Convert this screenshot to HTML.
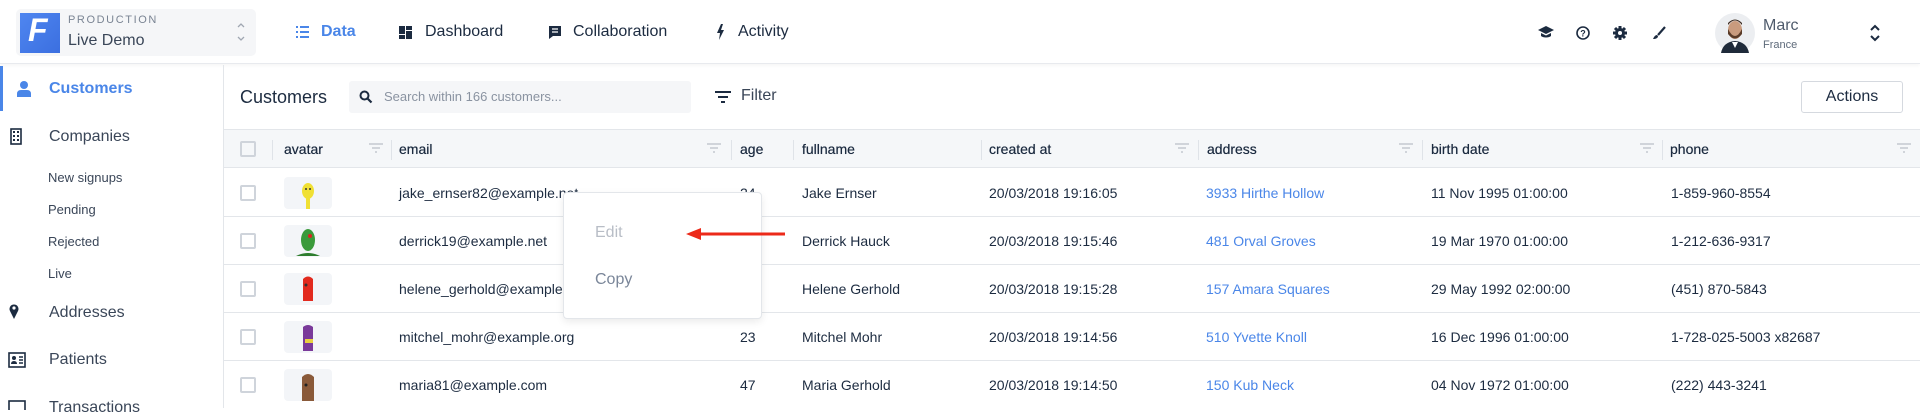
<!DOCTYPE html>
<html><head><meta charset="utf-8"><style>
*{box-sizing:border-box;margin:0;padding:0}
body{width:1920px;height:408px;overflow:hidden;background:#fff;font-family:"Liberation Sans",sans-serif;color:#1c2b40;position:relative}
.a{position:absolute;white-space:nowrap}
.hdr{position:absolute;left:0;top:0;width:1920px;height:64px;border-bottom:1px solid #e8eaee;box-shadow:0 2px 3px rgba(0,0,0,.03)}
.nav{font-size:16px;color:#1c2b40;top:23px}
.side{font-size:16px;color:#3a4658}
.sub{font-size:13px;color:#3a4658}
.th{font-size:14px;color:#1c2b40;top:141px;text-shadow:0 0 .4px #1c2b40}
.td{font-size:14px;color:#1c2b40}
.lnk{color:#4a86e8}
.sep{position:absolute;top:140px;width:1px;height:20px;background:#dfe3e8}
.cb{position:absolute;width:16px;height:16px;border:2px solid #cfd4db;border-radius:2px;left:240px}
.rl{position:absolute;left:224px;width:1696px;height:1px;background:#e3e6ea}
.av{position:absolute;left:284px;width:48px;height:32px;background:#f3f5f8;border-radius:4px}
.fi{position:absolute;top:143px;width:14px;height:10px}
</style></head><body>
<div class="hdr"></div>
<div class="a" style="left:16px;top:9px;width:240px;height:47px;background:#f5f6f8;border-radius:5px"></div>
<div class="a" style="left:20px;top:13px;width:40px;height:40px;background:linear-gradient(135deg,#4f86f0,#3b6fe0)"></div>
<div class="a" style="left:28px;top:12px;font-size:32px;font-style:italic;font-weight:bold;color:#fff">F</div>
<div class="a" style="left:68px;top:14px;font-size:11px;letter-spacing:1.6px;color:#7a8493">PRODUCTION</div>
<div class="a" style="left:68px;top:32px;font-size:16px;color:#3a4658">Live Demo</div>
<svg class="a" style="left:236px;top:22px" width="10" height="20"><path d="M2 5l3-3 3 3M2 15l3 3 3-3" fill="none" stroke="#a0a7b2" stroke-width="1.3"/></svg>
<!-- nav -->
<svg class="a" style="left:296px;top:26px" width="13" height="12"><g fill="#4a86e8"><rect x="0" y="0" width="2" height="2"/><rect x="4" y="0" width="9" height="2"/><rect x="0" y="5" width="2" height="2"/><rect x="4" y="5" width="9" height="2"/><rect x="0" y="10" width="2" height="2"/><rect x="4" y="10" width="9" height="2"/></g></svg>
<div class="a nav" style="left:321px;color:#4a86e8;font-weight:bold">Data</div>
<svg class="a" style="left:399px;top:26px" width="13" height="13"><g fill="#1c2b40"><rect width="6" height="8"/><rect x="7" width="6" height="4"/><rect y="9" width="6" height="4"/><rect x="7" y="5" width="6" height="8"/></g></svg>
<div class="a nav" style="left:425px">Dashboard</div>
<svg class="a" style="left:548px;top:25px" width="14" height="15"><path d="M1 1h12v10H5l-4 3z" fill="#1c2b40"/><path d="M4 4h6M4 7h6" stroke="#fff" stroke-width="1.3"/></svg>
<div class="a nav" style="left:573px">Collaboration</div>
<svg class="a" style="left:716px;top:24px" width="9" height="16"><path d="M5 0L1 9h3l-1 7 5-10H5l2-6z" fill="#1c2b40"/></svg>
<div class="a nav" style="left:738px">Activity</div>
<!-- right icons -->
<svg class="a" style="left:1538px;top:25px" width="16" height="15"><path d="M8 1L0 5l8 4 8-4z M3 8v3c2 2 8 2 10 0V8L8 10.5z" fill="#1c2b40"/></svg>
<svg class="a" style="left:1576px;top:26px" width="14" height="14"><circle cx="7" cy="7" r="6" fill="none" stroke="#1c2b40" stroke-width="1.6"/><text x="7" y="10.5" font-size="9" font-weight="bold" text-anchor="middle" fill="#1c2b40" font-family="Liberation Sans">?</text></svg>
<svg class="a" style="left:1613px;top:26px" width="14" height="14"><circle cx="7" cy="7" r="5" fill="#1c2b40"/><g stroke="#1c2b40" stroke-width="3"><path d="M7 0v14M0 7h14M2 2l10 10M12 2L2 12"/></g><circle cx="7" cy="7" r="2" fill="#fff"/></svg>
<svg class="a" style="left:1652px;top:26px" width="14" height="14"><path d="M13 1L6 9" stroke="#1c2b40" stroke-width="2.2"/><path d="M5 9c-2 0-3 2-4 4 3 0 5-1 5-3z" fill="#1c2b40"/></svg>
<svg class="a" style="left:1715px;top:13px" width="40" height="40"><circle cx="20" cy="20" r="20" fill="#eceef1"/><ellipse cx="20" cy="17" rx="7" ry="9" fill="#c99b7e"/><path d="M13 16q7 14 14 0v5q-7 9-14 0z" fill="#5a3b28"/><path d="M13 12q7-9 14 0v-2q-7-7-14 0z" fill="#3d2a1f"/><path d="M6 40q2-11 14-12 12 1 14 12z" fill="#1f2a3a"/><path d="M17 29l3 6 3-6z" fill="#fff"/></svg>
<div class="a" style="left:1763px;top:17px;font-size:16px;color:#4f5b6c">Marc</div>
<div class="a" style="left:1763px;top:39px;font-size:11px;color:#5e6a7a">France</div>
<svg class="a" style="left:1869px;top:24px" width="12" height="18"><path d="M2 6l4-4 4 4M2 12l4 4 4-4" fill="none" stroke="#1c2b40" stroke-width="2"/></svg>
<!-- sidebar -->
<div class="a" style="left:223px;top:65px;width:1px;height:343px;background:#e3e6ea"></div>
<div class="a" style="left:0;top:66px;width:3px;height:45px;background:#4a86e8"></div>
<svg class="a" style="left:17px;top:81px" width="14" height="16"><circle cx="7" cy="4" r="4" fill="#4a86e8"/><path d="M0 16v-3q0-4 4-4h6q4 0 4 4v3z" fill="#4a86e8"/></svg>
<div class="a side" style="left:49px;top:80px;color:#4a86e8;font-weight:bold">Customers</div>
<svg class="a" style="left:10px;top:128px" width="12" height="17"><rect x="1" y="1" width="10" height="15" fill="none" stroke="#1c2b40" stroke-width="1.6"/><g fill="#1c2b40"><rect x="3" y="3" width="2" height="2"/><rect x="7" y="3" width="2" height="2"/><rect x="3" y="7" width="2" height="2"/><rect x="7" y="7" width="2" height="2"/><rect x="3" y="11" width="2" height="2"/><rect x="7" y="11" width="2" height="2"/></g></svg>
<div class="a side" style="left:49px;top:128px">Companies</div>
<div class="a sub" style="left:48px;top:170px">New signups</div>
<div class="a sub" style="left:48px;top:202px">Pending</div>
<div class="a sub" style="left:48px;top:234px">Rejected</div>
<div class="a sub" style="left:48px;top:266px">Live</div>
<svg class="a" style="left:9px;top:303px" width="10" height="16"><path d="M5 16L1 8a4.5 4.5 0 118 0z" fill="#1c2b40"/><circle cx="5" cy="5" r="1.6" fill="#fff"/></svg>
<div class="a side" style="left:49px;top:304px">Addresses</div>
<svg class="a" style="left:8px;top:352px" width="18" height="16"><rect x="1" y="1" width="16" height="14" fill="none" stroke="#1c2b40" stroke-width="1.6"/><circle cx="6" cy="6" r="2" fill="#1c2b40"/><path d="M3 12q0-3 3-3t3 3z" fill="#1c2b40"/><path d="M11 5h4M11 8h4M11 11h4" stroke="#1c2b40" stroke-width="1.4"/></svg>
<div class="a side" style="left:49px;top:351px">Patients</div>
<svg class="a" style="left:8px;top:400px" width="18" height="10"><rect x="1" y="1" width="16" height="14" fill="none" stroke="#1c2b40" stroke-width="1.6"/></svg>
<div class="a side" style="left:49px;top:399px">Transactions</div>
<!-- toolbar -->
<div class="a" style="left:240px;top:87px;font-size:18px;color:#1c2b40">Customers</div>
<div class="a" style="left:349px;top:81px;width:342px;height:32px;background:#f5f6f8;border-radius:3px"></div>
<svg class="a" style="left:359px;top:90px" width="14" height="14"><circle cx="5.5" cy="5.5" r="4" fill="none" stroke="#1c2b40" stroke-width="2"/><path d="M8.5 8.5l4 4" stroke="#1c2b40" stroke-width="2.2"/></svg>
<div class="a" style="left:384px;top:89px;font-size:13px;color:#8a93a1">Search within 166 customers...</div>
<svg class="a" style="left:715px;top:91px" width="16" height="12"><path d="M0 1h16M3 6h10M6 11h4" stroke="#1c2b40" stroke-width="2"/></svg>
<div class="a" style="left:741px;top:87px;font-size:16px;color:#3a4658">Filter</div>
<div class="a" style="left:1801px;top:81px;width:102px;height:32px;border:1px solid #d5d9df;border-radius:3px;font-size:16px;text-align:center;line-height:30px;color:#1c2b40">Actions</div>
<!-- table header -->
<div class="a" style="left:224px;top:129px;width:1696px;height:39px;background:#f5f7f9;border-top:1px solid #e3e6ea;border-bottom:1px solid #e3e6ea"></div>
<div class="cb" style="top:141px"></div>
<div class="sep" style="left:272px"></div>
<div class="a th" style="left:284px">avatar</div>
<div class="sep" style="left:391px"></div>
<div class="a th" style="left:399px">email</div>
<div class="sep" style="left:731px"></div>
<div class="a th" style="left:740px">age</div>
<div class="sep" style="left:793px"></div>
<div class="a th" style="left:802px">fullname</div>
<div class="sep" style="left:981px"></div>
<div class="a th" style="left:989px">created at</div>
<div class="sep" style="left:1198px"></div>
<div class="a th" style="left:1207px">address</div>
<div class="sep" style="left:1422px"></div>
<div class="a th" style="left:1431px">birth date</div>
<div class="sep" style="left:1662px"></div>
<div class="a th" style="left:1670px">phone</div>
<svg width="0" height="0" style="position:absolute"><defs><g id="f"><path d="M0 1h14M3 5h8M6 9h2" stroke="#c3c8d0" stroke-width="1.5"/></g></defs></svg>
<svg class="fi" style="left:369px"><use href="#f"/></svg>
<svg class="fi" style="left:707px"><use href="#f"/></svg>
<svg class="fi" style="left:1175px"><use href="#f"/></svg>
<svg class="fi" style="left:1399px"><use href="#f"/></svg>
<svg class="fi" style="left:1640px"><use href="#f"/></svg>
<svg class="fi" style="left:1897px"><use href="#f"/></svg>
<!-- rows -->
<div class="rl" style="top:216px"></div><div class="rl" style="top:264px"></div><div class="rl" style="top:312px"></div><div class="rl" style="top:360px"></div>
<div class="cb" style="top:185px"></div><div class="cb" style="top:233px"></div><div class="cb" style="top:281px"></div><div class="cb" style="top:329px"></div><div class="cb" style="top:377px"></div>
<div class="av" style="top:177px"><svg width="48" height="32"><ellipse cx="24" cy="14" rx="6" ry="8" fill="#f0e034"/><rect x="22" y="20" width="4" height="12" fill="#f0e034"/><circle cx="22" cy="12" r="1" fill="#333"/><circle cx="26" cy="12" r="1" fill="#333"/></svg></div>
<div class="av" style="top:225px"><svg width="48" height="32"><ellipse cx="24" cy="15" rx="7" ry="11" fill="#3a9a3a"/><path d="M12 31q12-6 24 0z" fill="#2e7d2e"/><circle cx="26" cy="11" r="2" fill="#d22"/></svg></div>
<div class="av" style="top:273px"><svg width="48" height="32"><path d="M19 6q5-5 10 0v22h-10z" fill="#e22a1e"/><circle cx="22" cy="12" r="1.5" fill="#333"/></svg></div>
<div class="av" style="top:321px"><svg width="48" height="32"><path d="M19 6q5-4 10 0v24h-10z" fill="#7a3a9a"/><rect x="21" y="18" width="8" height="4" fill="#e8d040"/></svg></div>
<div class="av" style="top:369px"><svg width="48" height="32"><path d="M18 8q6-6 12 0v24h-12z" fill="#8a5a3a"/><circle cx="22" cy="16" r="1.5" fill="#222"/></svg></div>

<div class="a td" style="left:399px;top:185px">jake_ernser82@example.net</div>
<div class="a td" style="left:740px;top:185px">24</div>
<div class="a td" style="left:802px;top:185px">Jake Ernser</div>
<div class="a td" style="left:989px;top:185px">20/03/2018 19:16:05</div>
<div class="a td lnk" style="left:1206px;top:185px">3933 Hirthe Hollow</div>
<div class="a td" style="left:1431px;top:185px">11 Nov 1995 01:00:00</div>
<div class="a td" style="left:1671px;top:185px">1-859-960-8554</div>

<div class="a td" style="left:399px;top:233px">derrick19@example.net</div>
<div class="a td" style="left:802px;top:233px">Derrick Hauck</div>
<div class="a td" style="left:989px;top:233px">20/03/2018 19:15:46</div>
<div class="a td lnk" style="left:1206px;top:233px">481 Orval Groves</div>
<div class="a td" style="left:1431px;top:233px">19 Mar 1970 01:00:00</div>
<div class="a td" style="left:1671px;top:233px">1-212-636-9317</div>

<div class="a td" style="left:399px;top:281px">helene_gerhold@example.</div>
<div class="a td" style="left:802px;top:281px">Helene Gerhold</div>
<div class="a td" style="left:989px;top:281px">20/03/2018 19:15:28</div>
<div class="a td lnk" style="left:1206px;top:281px">157 Amara Squares</div>
<div class="a td" style="left:1431px;top:281px">29 May 1992 02:00:00</div>
<div class="a td" style="left:1671px;top:281px">(451) 870-5843</div>

<div class="a td" style="left:399px;top:329px">mitchel_mohr@example.org</div>
<div class="a td" style="left:740px;top:329px">23</div>
<div class="a td" style="left:802px;top:329px">Mitchel Mohr</div>
<div class="a td" style="left:989px;top:329px">20/03/2018 19:14:56</div>
<div class="a td lnk" style="left:1206px;top:329px">510 Yvette Knoll</div>
<div class="a td" style="left:1431px;top:329px">16 Dec 1996 01:00:00</div>
<div class="a td" style="left:1671px;top:329px">1-728-025-5003 x82687</div>

<div class="a td" style="left:399px;top:377px">maria81@example.com</div>
<div class="a td" style="left:740px;top:377px">47</div>
<div class="a td" style="left:802px;top:377px">Maria Gerhold</div>
<div class="a td" style="left:989px;top:377px">20/03/2018 19:14:50</div>
<div class="a td lnk" style="left:1206px;top:377px">150 Kub Neck</div>
<div class="a td" style="left:1431px;top:377px">04 Nov 1972 01:00:00</div>
<div class="a td" style="left:1671px;top:377px">(222) 443-3241</div>
<!-- context menu -->
<div class="a" style="left:563px;top:192px;width:199px;height:127px;background:#fff;border:1px solid #e3e6ea;border-radius:4px;box-shadow:0 3px 8px rgba(0,0,0,.08)"></div>
<div class="a" style="left:595px;top:224px;font-size:16px;color:#b8bdc6">Edit</div>
<div class="a" style="left:595px;top:271px;font-size:16px;color:#7a8699">Copy</div>
<svg class="a" style="left:684px;top:226px" width="104" height="16"><path d="M14 8H101" stroke="#ec2a1a" stroke-width="3"/><path d="M2 8L17 2v12z" fill="#ec2a1a"/></svg>
</body></html>
